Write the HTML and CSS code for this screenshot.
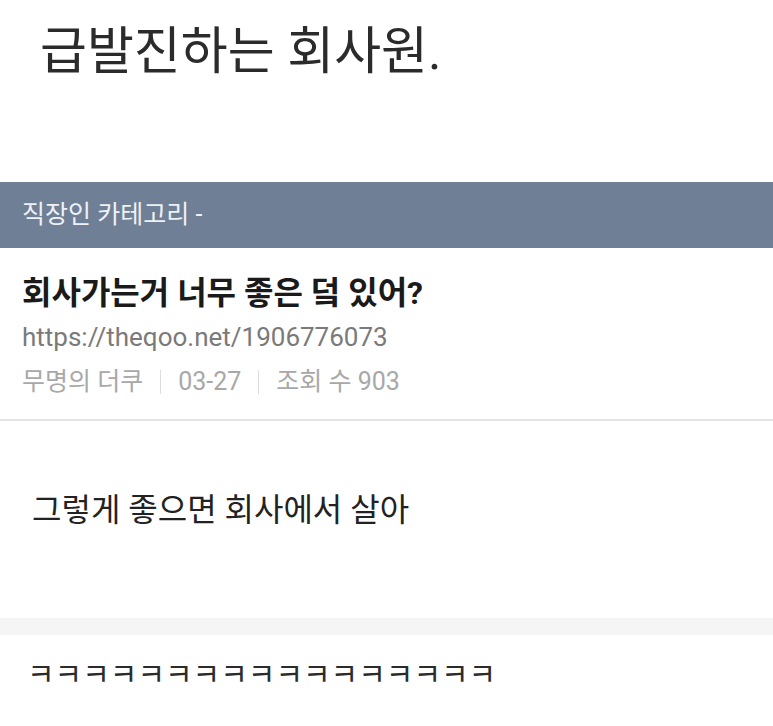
FILE: index.html
```html
<!DOCTYPE html>
<html lang="ko">
<head>
  <meta charset="UTF-8" />
  <meta name="viewport" content="width=device-width, initial-scale=1.0"/>
  <title>급발진하는 회사원.</title>
  <link rel="stylesheet" href="styles.css">
</head>
<body>
  <h1 class="headline">급발진하는 회사원.</h1>

  <div class="category">직장인 카테고리 -</div>

  <div class="post">
    <div class="post-title">회사가는거 너무 좋은 덬 있어?</div>
    <div class="post-url">https://theqoo.net/1906776073</div>
    <div class="post-meta">
      <span>무명의 더쿠</span>
      <span class="sep"></span>
      <span>03-27</span>
      <span class="sep"></span>
      <span>조회 수 903</span>
    </div>
  </div>

  <div class="comment">그렇게 좋으면 회사에서 살아</div>

  <div class="divider"></div>

  <div class="comment laugh">ㅋㅋㅋㅋㅋㅋㅋㅋㅋㅋㅋㅋㅋㅋㅋㅋㅋ</div>
</body>
</html>
```

FILE: styles.css
```css
body {
  margin: 0;
  background: #fff;
  font-family: Roboto, "Noto Sans CJK KR", sans-serif;
  color: #222;
}

.headline {
  margin: 0;
  padding: 15px 0 0 40px;
  height: 182px;
  box-sizing: border-box;
  font-size: 51px;
  font-weight: 400;
  line-height: 74px;
  color: #2b2b2b;
}

.category {
  height: 66px;
  background: #6f7f96;
  color: #eef1f5;
  font-size: 25px;
  line-height: 66px;
  padding-left: 22px;
}

.post {
  padding: 23px 22px 0;
  height: 173px;
  box-sizing: border-box;
  border-bottom: 2px solid #e4e4e4;
}

.post-title {
  font-size: 32px;
  font-weight: 700;
  color: #1a1a1a;
  line-height: 44px;
}

.post-url {
  font-size: 26px;
  color: #7a7a7a;
  line-height: 44px;
}

.post-meta {
  display: flex;
  align-items: center;
  font-size: 25px;
  color: #a8a8a8;
  line-height: 46px;
}

.sep {
  width: 1px;
  height: 24px;
  background: #dcdcdc;
  margin: 0 17px;
}

.comment {
  padding-left: 32px;
  height: 197px;
  font-size: 32px;
  line-height: 178px;
  color: #222;
}

.divider {
  height: 17px;
  background: #f5f5f5;
}

.laugh {
  padding-left: 27px;
  height: auto;
  font-size: 30px;
  line-height: 80px;
  color: #2b2b2b;
}
```
